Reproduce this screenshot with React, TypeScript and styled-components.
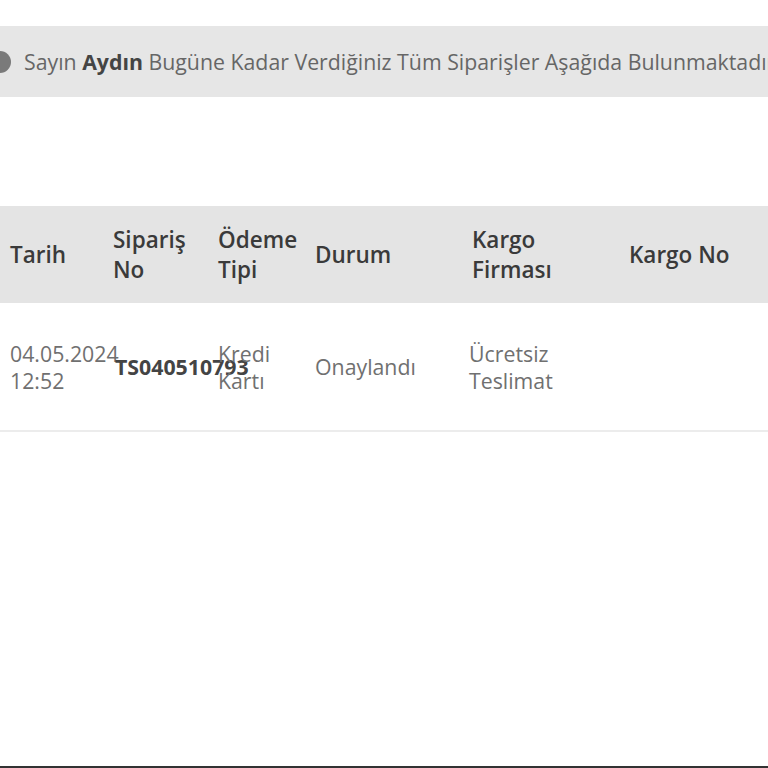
import React from "react";
import styled, { createGlobalStyle } from "styled-components";

const Global = createGlobalStyle`
  body { margin: 0; background: #fff; font-family: "Open Sans", sans-serif; overflow: hidden; }
`;
const Page = styled.div`width: 768px; height: 768px; overflow: hidden; padding-top: 26px; box-sizing: border-box; border-bottom: 2px solid #333;`;
const Banner = styled.div`
  height: 71px; background: #e6e6e6; display: flex; align-items: center; gap: 13px;
  color: #666; font-size: 21.3px; white-space: nowrap; overflow: hidden;
  b { color: #444; font-weight: 700; }
`;
const Dot = styled.span`width: 22px; height: 22px; border-radius: 50%; background: #7a7a7a; margin-left: -11px; flex: none;`;
const Table = styled.table`margin-top: 109px; width: 768px; table-layout: fixed; border-collapse: collapse;`;
const Th = styled.th<{ w?: number }>`
  ${p => (p.w ? `width:${p.w}px;` : "")}
  background: #e4e4e4; height: 97px; text-align: left; vertical-align: middle;
  font-size: 22.5px; font-weight: 600; color: #3a3a3a; line-height: 30px; padding: 0 0 0 10px; box-sizing: border-box;
`;
const Td = styled.td<{ strong?: boolean }>`
  height: 127px; border-bottom: 2px solid #ececec; vertical-align: middle; padding: 0 0 0 10px;
  font-size: 21.3px; line-height: 27px; color: ${p => (p.strong ? "#444" : "#707070")};
  font-weight: ${p => (p.strong ? 700 : 400)}; white-space: nowrap; overflow: visible;
`;
const Shift = styled.span<{ x: number }>`display: inline-block; margin-left: ${p => p.x}px;`;
const Lines = styled.span`display: block; white-space: normal; width: 100px;`;

export default function App() {
  return (
    <Page>
      <Global />
      <Banner>
        <Dot />
        <span>Sayın <b>Aydın</b> Bugüne Kadar Verdiğiniz Tüm Siparişler Aşağıda Bulunmaktadır</span>
      </Banner>
      <Table>
        <thead>
          <tr>
            <Th w={103}>Tarih</Th>
            <Th w={105}>Sipariş No</Th>
            <Th w={97}>Ödeme Tipi</Th>
            <Th w={157}>Durum</Th>
            <Th w={157}><Lines>Kargo Firması</Lines></Th>
            <Th>Kargo No</Th>
          </tr>
        </thead>
        <tbody>
          <tr>
            <Td>04.05.2024<br />12:52</Td>
            <Td strong><Shift x={2}>TS040510793</Shift></Td>
            <Td>Kredi<br />Kartı</Td>
            <Td>Onaylandı</Td>
            <Td><Shift x={-3}>Ücretsiz<br />Teslimat</Shift></Td>
            <Td />
          </tr>
        </tbody>
      </Table>
    </Page>
  );
}
